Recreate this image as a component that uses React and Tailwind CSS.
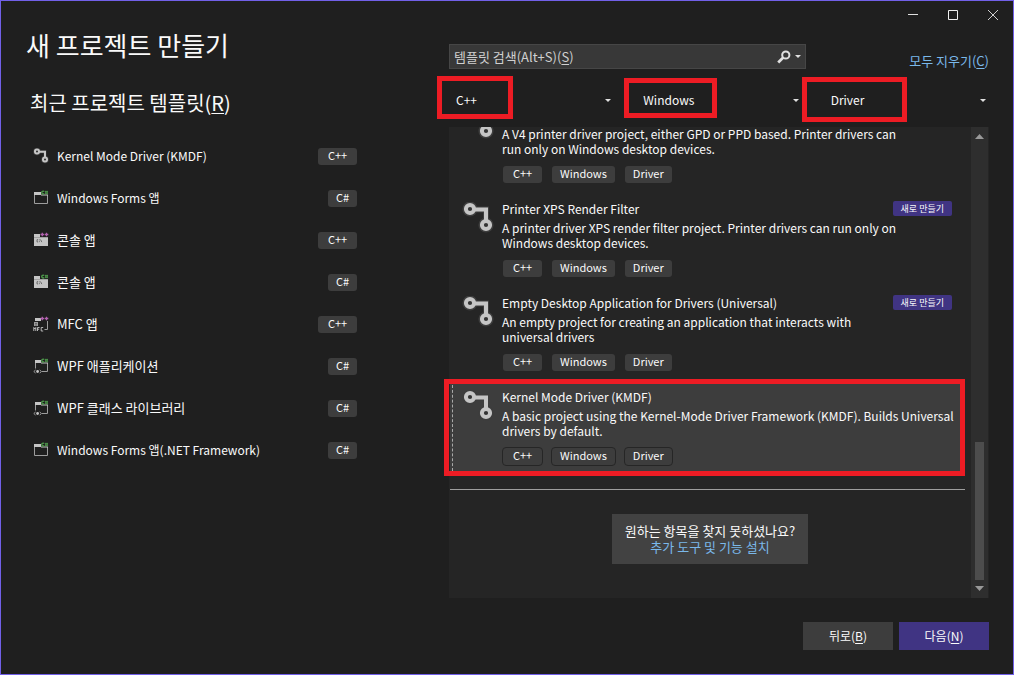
import React, { useState } from "react";

const recentTemplates = [
  { name: "Kernel Mode Driver (KMDF)", lang: "C++", icon: "driver" },
  { name: "Windows Forms 앱", lang: "C#", icon: "window" },
  { name: "콘솔 앱", lang: "C++", icon: "console", large: true },
  { name: "콘솔 앱", lang: "C#", icon: "console", large: true },
  { name: "MFC 앱", lang: "C++", icon: "mfc", large: true },
  { name: "WPF 애플리케이션", lang: "C#", icon: "wpf", large: true },
  { name: "WPF 클래스 라이브러리", lang: "C#", icon: "wpf", large: true },
  { name: "Windows Forms 앱(.NET Framework)", lang: "C#", icon: "window" },
];

const templates = [
  {
    id: "printer-v4",
    description:
      "A V4 printer driver project, either GPD or PPD based. Printer drivers can run only on Windows desktop devices.",
    isNew: true,
  },
  {
    id: "printer-xps",
    name: "Printer XPS Render Filter",
    description:
      "A printer driver XPS render filter project. Printer drivers can run only on Windows desktop devices.",
    isNew: true,
  },
  {
    id: "empty-desktop",
    name: "Empty Desktop Application for Drivers (Universal)",
    description:
      "An empty project for creating an application that interacts with universal drivers",
    isNew: true,
  },
  {
    id: "kmdf",
    name: "Kernel Mode Driver (KMDF)",
    description:
      "A basic project using the Kernel-Mode Driver Framework (KMDF). Builds Universal drivers by default.",
    isNew: false,
  },
];

const tags = ["C++", "Windows", "Driver"];

const filters = [
  {
    id: "language",
    label: "언어",
    options: ["C++", "C#"],
    mark: "-left-3 -top-[10px] h-[43px] w-[76px]",
  },
  {
    id: "platform",
    label: "플랫폼",
    options: ["Windows", "Linux"],
    mark: "-left-3 -top-2 h-10 w-[93px]",
  },
  {
    id: "type",
    label: "프로젝트 형식",
    options: ["Driver", "콘솔"],
    mark: "-left-[22px] -top-[9px] h-[45px] w-[105px]",
  },
];

// Underlined access key, e.g. (S)
const Key = ({ children }) => (
  <>
    (<u className="decoration-1 underline-offset-2">{children}</u>)
  </>
);

const DriverIcon = ({ className }) => (
  <svg className={className} viewBox="0 0 32 32" fill="none" aria-hidden="true">
    <path d="M8 7.5H24V23" stroke="#3d3d3d" strokeWidth="6" />
    <circle cx="8" cy="7" r="7.6" fill="#3d3d3d" />
    <circle cx="24" cy="23" r="7.6" fill="#3d3d3d" />
    <path d="M8 7.5H24V23" stroke="#c5c5c5" strokeWidth="4" />
    <circle cx="8" cy="7" r="4.1" fill="#333333" stroke="#c5c5c5" strokeWidth="4" />
    <circle cx="24" cy="23" r="4.1" fill="#333333" stroke="#c5c5c5" strokeWidth="4" />
  </svg>
);

// Small language mark in the top right corner of the recent icons
const LangMark = ({ lang }) =>
  lang === "C++" ? (
    <path
      d="M7.5 2.500h3.600M9.300.7v3.600M11.700 2.500h3.600M13.500.7v3.600"
      stroke="#b362b0"
      strokeWidth="1.3"
    />
  ) : (
    <g stroke="#4f9a4c" fill="none">
      <path d="M11.200 1.600A1.400 1.400 0 1 0 11.200 3.500" strokeWidth="1.400" />
      <path d="M12.800.8v3.400M14.200.8v3.400M12 1.700h3M12 3.200h3" strokeWidth="0.9" />
    </g>
  );

const RecentIcon = ({ icon, lang }) => {
  if (icon === "driver") return <DriverIcon className="h-4 w-4" />;
  return (
    <svg className="h-4 w-4" viewBox="0 0 16 16" fill="none" aria-hidden="true">
      {icon === "window" && (
        <>
          <path d="M1.500 3v10.500h13V5" stroke="#9d9d9d" />
          <path d="M1 2h7v3h-7zM8 4.500h7v1h-7z" fill="#c5c5c5" />
        </>
      )}
      {icon === "console" && (
        <>
          <path d="M1 2h6v3h8v9h-14z" fill="#c5c5c5" />
          <path d="M1 5.500h14" stroke="#8a8a8a" strokeWidth="0.6" />
          <path
            d="M5.200 7.700H4v2.200h1.200M6.500 7.500v.8M6.500 9.300v.8M7.500 7.500l1.300 2.600"
            stroke="#555555"
            strokeWidth="0.8"
          />
        </>
      )}
      {icon === "mfc" && (
        <>
          <path d="M2 2h6v3h-6z" fill="#c5c5c5" />
          <path d="M14.500 5v8.500h-3" stroke="#9d9d9d" />
          <rect x="1" y="6" width="4" height="4" fill="#9d9d9d" />
          <path d="M2 7.500h2M2 9h2" stroke="#444444" strokeWidth="0.6" />
          <path
            d="M.8 15v-3.500l1 1.500 1-1.500V15M4.500 15v-3.500h2M4.500 13.200h1.700M10.200 11.500h-2V15h2"
            stroke="#c5c5c5"
            strokeWidth="0.9"
          />
        </>
      )}
      {icon === "wpf" && (
        <>
          <path d="M2.500 10.500V3M14.500 5v8.500H9" stroke="#9d9d9d" />
          <path d="M2 2h6v3h-6zM8 4.500h7v1h-7z" fill="#c5c5c5" />
          <path d="M2.600 12L.8 13.500l1.800 1.500M6.700 12l1.800 1.500-1.800 1.500" stroke="#9d9d9d" />
          <circle cx="4.600" cy="13.500" r="1.400" fill="#c5c5c5" />
        </>
      )}
      <LangMark lang={lang} />
    </svg>
  );
};

const Tag = ({ children, selected }) => (
  <span
    className={`rounded border bg-[#3d3d3d] bg-clip-padding px-2 pb-0.5 text-center text-[11px] leading-[15px] ${
      selected ? "border-[#262626]" : "border-transparent"
    } ${children === "C++" ? "min-w-[41px]" : ""}`}
  >
    {children}
  </span>
);

const TemplateItem = ({ template, selected, onSelect }) => (
  <li
    className={`relative mr-1.5 ml-px ${selected ? "bg-[#3d3d3d]" : ""}`}
    onClick={onSelect}
  >
    {selected && (
      <>
        <div className="absolute inset-y-1 left-0.5 border-l border-dashed border-[#a8a8a8]"></div>
        <div className="pointer-events-none absolute -top-0.5 right-0 -bottom-px -left-1.5 border-5 border-[#ed1c24]"></div>
      </>
    )}
    <div className="flex gap-2 pt-2 pr-1 pb-[9px] pl-3">
      <DriverIcon className="mt-px h-8 w-8 shrink-0" />
      <div className="min-w-0 flex-1 text-xs leading-[15px]">
        <div className="flex min-h-[15px] items-center justify-between">
          {template.name && <h3>{template.name}</h3>}
          {template.name && template.isNew && (
            <span className="mr-[9px] rounded-xs bg-[#403483] px-2 text-[9px] leading-[15px]">
              새로 만들기
            </span>
          )}
        </div>
        <p className={template.isNew ? "mt-1 mr-16" : "mt-1"}>{template.description}</p>
        <div className="mt-[9px] flex gap-2">
          {tags.map((tag) => (
            <Tag key={tag} selected={selected}>
              {tag}
            </Tag>
          ))}
        </div>
      </div>
    </div>
  </li>
);

const App = () => {
  const [selectedId, setSelectedId] = useState("kmdf");
  const [query, setQuery] = useState("");

  return (
    <div className="flex h-screen min-h-[480px] flex-col border border-[#7160e8] bg-[#1f1f1f] font-['Noto_Sans_CJK_KR',sans-serif] text-xs text-[#fafafa]">
      {/* Window controls */}
      <div className="flex h-7 shrink-0 justify-end">
        <button className="flex w-10 items-center justify-center" aria-label="최소화">
          <svg className="h-[10px] w-[10px]" viewBox="0 0 10 10" stroke="#e0e0e0">
            <path d="M0 4.500h10" />
          </svg>
        </button>
        <button className="flex w-10 items-center justify-center" aria-label="최대화">
          <svg className="h-[10px] w-[10px]" viewBox="0 0 10 10" fill="none" stroke="#f0f0f0">
            <path d="M.5.5h9v9h-9z" />
          </svg>
        </button>
        <button className="flex w-10 items-center justify-center" aria-label="닫기">
          <svg className="h-[10px] w-[10px]" viewBox="0 0 10 10" stroke="#d0d0d0">
            <path d="M0 0l10 10M10 0L0 10" />
          </svg>
        </button>
      </div>

      <div className="flex min-h-0 flex-1 gap-[91px] pr-6 pl-[25px]">
        {/* Recent templates */}
        <section className="w-[332px] shrink-0">
          <h1 className="text-[26px] leading-8">새 프로젝트 만들기</h1>
          <h2 className="mt-7 ml-1 text-xl leading-7">
            최근 프로젝트 템플릿
            <Key>R</Key>
          </h2>
          <ul className="mt-[18px] ml-[7px]">
            {recentTemplates.map((item, index) => (
              <li key={index} className="flex h-[42px] items-center">
                <RecentIcon icon={item.icon} lang={item.lang} />
                <span className={`ml-2 flex-1 ${item.large ? "text-[13px]" : "text-xs"}`}>
                  {item.name}
                </span>
                <Tag>{item.lang}</Tag>
              </li>
            ))}
          </ul>
        </section>

        {/* Search, filters and results */}
        <section className="flex min-w-0 flex-1 flex-col pt-[15px]">
          <div className="flex items-end justify-between gap-4">
            <div className="relative flex h-[25px] max-w-[357px] flex-1 items-center border border-[#464646] bg-[#383838]">
              <input
                id="search"
                type="text"
                value={query}
                onChange={(e) => setQuery(e.target.value)}
                className="h-full min-w-0 flex-1 bg-transparent px-1 text-[13px] outline-none"
              />
              {!query && (
                <label htmlFor="search" className="absolute left-1 text-[13px] text-[#d0d0d0]">
                  템플릿 검색(Alt+S)
                  <Key>S</Key>
                </label>
              )}
              <button className="flex items-center gap-1 pr-1" aria-label="검색">
                <svg className="h-[14px] w-[14px]" viewBox="0 0 14 14" fill="none" stroke="#e0e0e0">
                  <circle cx="8.800" cy="5" r="3.600" strokeWidth="2" />
                  <path d="M6.200 7.600L1.200 12.400" strokeWidth="2.800" />
                </svg>
                <svg className="h-[3px] w-[6px]" viewBox="0 0 6 3" fill="#e0e0e0">
                  <path d="M0 0h6L3 3z" />
                </svg>
              </button>
            </div>
            <a href="#clear" className="text-[13px] leading-4 text-[#7ab8ea]">
              모두 지우기
              <Key>C</Key>
            </a>
          </div>

          <div className="mt-[17px] grid grid-cols-3 gap-[22px]">
            {filters.map((filter) => (
              <div key={filter.id} className="relative flex h-7 items-center">
                <select
                  aria-label={filter.label}
                  className="h-full w-full appearance-none bg-[#1f1f1f] pl-[7px] outline-none"
                >
                  {filter.options.map((option) => (
                    <option key={option}>{option}</option>
                  ))}
                </select>
                <svg
                  className="pointer-events-none absolute right-[3px] h-[3px] w-[6px]"
                  viewBox="0 0 6 3"
                  fill="#e0e0e0"
                >
                  <path d="M0 0h6L3 3z" />
                </svg>
                <div
                  className={`pointer-events-none absolute border-5 border-[#ed1c24] ${filter.mark}`}
                ></div>
              </div>
            ))}
          </div>

          <div className="mt-[13px] flex min-h-0 flex-1 bg-[#252525] pr-px">
            <div className="flex min-w-0 flex-1 flex-col justify-end overflow-y-clip pb-[34px]">
              <ul className="shrink-0">
                {templates.map((template) => (
                  <TemplateItem
                    key={template.id}
                    template={template}
                    selected={template.id === selectedId}
                    onSelect={() => setSelectedId(template.id)}
                  />
                ))}
              </ul>
              <hr className="mt-[14px] mr-1.5 ml-px border-[#9d9d9d]" />
              <div className="mx-auto mt-6 flex shrink-0 flex-col bg-[#424242] px-[13px] py-[9px] text-center text-[13px] leading-4">
                <p>원하는 항목을 찾지 못하셨나요?</p>
                <a href="#install" className="text-[#7ab8ea]">
                  추가 도구 및 기능 설치
                </a>
              </div>
            </div>

            {/* Scrollbar */}
            <div className="flex w-[17px] flex-col items-center bg-[#2e2e2e] py-[7px]">
              <svg className="h-[5px] w-[9px]" viewBox="0 0 9 5" fill="#999999">
                <path d="M4.500 0L9 5H0z" />
              </svg>
              <div className="flex-1"></div>
              <div className="h-[138px] w-[9px] bg-[#4d4d4d]"></div>
              <svg className="mt-1.5 h-[5px] w-[9px]" viewBox="0 0 9 5" fill="#999999">
                <path d="M0 0h9L4.500 5z" />
              </svg>
            </div>
          </div>

          <div className="my-6 flex justify-end gap-1.5">
            <button className="h-7 w-[90px] bg-[#3d3d3d]">
              뒤로
              <Key>B</Key>
            </button>
            <button className="h-7 w-[90px] bg-[#403483]">
              다음
              <Key>N</Key>
            </button>
          </div>
        </section>
      </div>
    </div>
  );
};

export default App;
